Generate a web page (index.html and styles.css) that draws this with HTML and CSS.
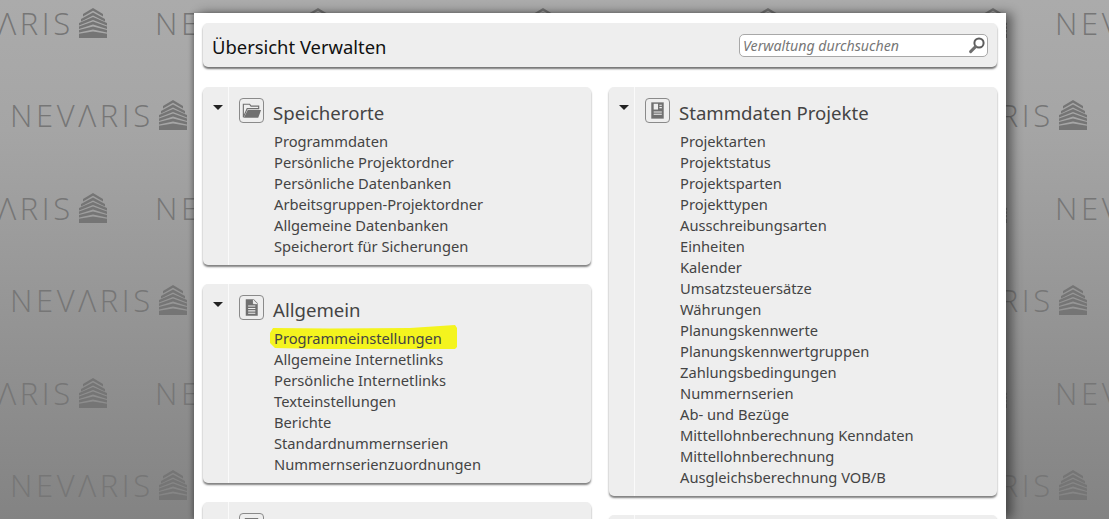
FILE: index.html
```html
<!DOCTYPE html>
<html lang="de">
<head>
<meta charset="utf-8">
<title>Übersicht Verwalten</title>
<link rel="stylesheet" href="styles.css">
</head>
<body>
<svg class="defs" width="0" height="0" aria-hidden="true">
  <symbol id="roof" viewBox="0 0 28 30">
    <path d="M14 0 L24 6 V8.5 L14 2.8 L4 8.5 V6 Z M14 4.5 L26 11 V13.5 L14 7.5 L2 13.5 V11 Z M14 9 L28 15 V17.5 L14 12 L0 17.5 V15 Z M14 13.5 L28 18.5 V21 L14 16.5 L0 21 V18.5 Z M0 22 L14 18.5 L28 22 V24.5 L14 21.5 L0 24.5 Z M0 25.8 L14 23.5 L28 25.8 V30 H0 Z" fill="#757575"/>
  </symbol>
</svg>

<div class="wall" aria-hidden="true">
  <div class="wall-row shifted"><span class="mark">NEVΛRIS<svg class="roof"><use href="#roof"/></svg></span><span class="mark">NEVΛRIS<svg class="roof"><use href="#roof"/></svg></span><span class="mark">NEVΛRIS<svg class="roof"><use href="#roof"/></svg></span><span class="mark">NEVΛRIS<svg class="roof"><use href="#roof"/></svg></span><span class="mark">NEVΛRIS<svg class="roof"><use href="#roof"/></svg></span><span class="mark">NEVΛRIS<svg class="roof"><use href="#roof"/></svg></span></div>
  <div class="wall-row"><span class="mark">NEVΛRIS<svg class="roof"><use href="#roof"/></svg></span><span class="mark">NEVΛRIS<svg class="roof"><use href="#roof"/></svg></span><span class="mark">NEVΛRIS<svg class="roof"><use href="#roof"/></svg></span><span class="mark">NEVΛRIS<svg class="roof"><use href="#roof"/></svg></span><span class="mark">NEVΛRIS<svg class="roof"><use href="#roof"/></svg></span></div>
  <div class="wall-row shifted"><span class="mark">NEVΛRIS<svg class="roof"><use href="#roof"/></svg></span><span class="mark">NEVΛRIS<svg class="roof"><use href="#roof"/></svg></span><span class="mark">NEVΛRIS<svg class="roof"><use href="#roof"/></svg></span><span class="mark">NEVΛRIS<svg class="roof"><use href="#roof"/></svg></span><span class="mark">NEVΛRIS<svg class="roof"><use href="#roof"/></svg></span><span class="mark">NEVΛRIS<svg class="roof"><use href="#roof"/></svg></span></div>
  <div class="wall-row"><span class="mark">NEVΛRIS<svg class="roof"><use href="#roof"/></svg></span><span class="mark">NEVΛRIS<svg class="roof"><use href="#roof"/></svg></span><span class="mark">NEVΛRIS<svg class="roof"><use href="#roof"/></svg></span><span class="mark">NEVΛRIS<svg class="roof"><use href="#roof"/></svg></span><span class="mark">NEVΛRIS<svg class="roof"><use href="#roof"/></svg></span></div>
  <div class="wall-row shifted"><span class="mark">NEVΛRIS<svg class="roof"><use href="#roof"/></svg></span><span class="mark">NEVΛRIS<svg class="roof"><use href="#roof"/></svg></span><span class="mark">NEVΛRIS<svg class="roof"><use href="#roof"/></svg></span><span class="mark">NEVΛRIS<svg class="roof"><use href="#roof"/></svg></span><span class="mark">NEVΛRIS<svg class="roof"><use href="#roof"/></svg></span><span class="mark">NEVΛRIS<svg class="roof"><use href="#roof"/></svg></span></div>
  <div class="wall-row"><span class="mark">NEVΛRIS<svg class="roof"><use href="#roof"/></svg></span><span class="mark">NEVΛRIS<svg class="roof"><use href="#roof"/></svg></span><span class="mark">NEVΛRIS<svg class="roof"><use href="#roof"/></svg></span><span class="mark">NEVΛRIS<svg class="roof"><use href="#roof"/></svg></span><span class="mark">NEVΛRIS<svg class="roof"><use href="#roof"/></svg></span></div>
</div>

<main class="panel">
  <header class="topbar">
    <h1 class="page-title">Übersicht Verwalten</h1>
    <div class="search">
      <span class="search-text">Verwaltung durchsuchen</span>
      <svg class="search-icon" viewBox="0 0 18 18"><circle cx="11" cy="7" r="4.6" fill="#fff" stroke="#5c5c5c" stroke-width="2"/><path d="M7.6 10.6 L2.6 15.6" stroke="#6e6e6e" stroke-width="3" stroke-linecap="round"/></svg>
    </div>
  </header>

  <div class="columns">
    <div class="column">
      <section class="card">
        <div class="gutter"><span class="caret"></span></div>
        <div class="card-body">
          <div class="card-head">
            <span class="icon-box">
              <svg viewBox="0 0 24 24"><path d="M3.5 19 V5.5 H10 L11.5 7.5 H19.5 V10 H7.5 L3.5 19 Z" fill="none" stroke="#707070" stroke-width="1.2"/><path d="M4 19.5 L8 11.5 H22 L19 19.5 Z" fill="#707070"/></svg>
            </span>
            <h2 class="card-title">Speicherorte</h2>
          </div>
          <ul class="links">
            <li>Programmdaten</li>
            <li>Persönliche Projektordner</li>
            <li>Persönliche Datenbanken</li>
            <li>Arbeitsgruppen-Projektordner</li>
            <li>Allgemeine Datenbanken</li>
            <li>Speicherort für Sicherungen</li>
          </ul>
        </div>
      </section>

      <section class="card">
        <div class="gutter"><span class="caret"></span></div>
        <div class="card-body">
          <div class="card-head">
            <span class="icon-box">
              <svg viewBox="0 0 24 24"><path d="M6 3.5 H14.5 L18.5 7.5 V20.5 H6 Z" fill="#707070"/><path d="M14 4 V8 H18" fill="#eee" stroke="#eee"/><path d="M8.5 10.5 H16 M8.5 13 H16 M8.5 15.5 H16 M8.5 18 H16" stroke="#eee" stroke-width="1.1"/></svg>
            </span>
            <h2 class="card-title">Allgemein</h2>
          </div>
          <ul class="links">
            <li><span class="marked"><svg class="marker" viewBox="0 0 187 25" preserveAspectRatio="none"><path d="M3 3 L60 3.5 L140 3 L185 0 L187 3 L187 22 L185 24 L120 24 L50 24 L5 23 L0 18 L0 8 Z" fill="#f4f41e"/></svg><span class="marked-text">Programmeinstellungen</span></span></li>
            <li>Allgemeine Internetlinks</li>
            <li>Persönliche Internetlinks</li>
            <li>Texteinstellungen</li>
            <li>Berichte</li>
            <li>Standardnummernserien</li>
            <li>Nummernserienzuordnungen</li>
          </ul>
        </div>
      </section>

      <section class="card">
        <div class="gutter"></div>
        <div class="card-body">
          <div class="card-head">
            <span class="icon-box">
              <svg viewBox="0 0 24 24"><path d="M5 5 H19" stroke="#707070" stroke-width="1.5"/></svg>
            </span>
          </div>
        </div>
      </section>
    </div>

    <div class="column">
      <section class="card">
        <div class="gutter"><span class="caret"></span></div>
        <div class="card-body">
          <div class="card-head">
            <span class="icon-box">
              <svg viewBox="0 0 24 24"><path d="M5.5 3.5 H18.5 V20.5 H5.5 Z" fill="#707070"/><path d="M8 5 H12.5 V11 H8 Z" fill="#eee"/><path d="M14 6.5 H16.5 M14 9 H16.5 M8 13.5 H16.5 M8 16 H16.5" stroke="#eee" stroke-width="1.1"/></svg>
            </span>
            <h2 class="card-title">Stammdaten Projekte</h2>
          </div>
          <ul class="links">
            <li>Projektarten</li>
            <li>Projektstatus</li>
            <li>Projektsparten</li>
            <li>Projekttypen</li>
            <li>Ausschreibungsarten</li>
            <li>Einheiten</li>
            <li>Kalender</li>
            <li>Umsatzsteuersätze</li>
            <li>Währungen</li>
            <li>Planungskennwerte</li>
            <li>Planungskennwertgruppen</li>
            <li>Zahlungsbedingungen</li>
            <li>Nummernserien</li>
            <li>Ab- und Bezüge</li>
            <li>Mittellohnberechnung Kenndaten</li>
            <li>Mittellohnberechnung</li>
            <li>Ausgleichsberechnung VOB/B</li>
          </ul>
        </div>
      </section>

      <section class="card">
        <div class="gutter"></div>
        <div class="card-body">
          <div class="card-head"></div>
        </div>
      </section>
    </div>
  </div>
</main>
</body>
</html>
```

FILE: styles.css
```css
* { box-sizing: border-box; }

html, body {
  margin: 0;
  height: 519px;
  overflow: hidden;
}

body {
  position: relative;
  background: linear-gradient(180deg, #ababab 0%, #a5a5a5 25%, #838383 100%);
  font-family: "Noto Sans", "Open Sans", sans-serif;
  color: #444;
}

.defs { position: absolute; }

/* Watermark wallpaper */
.wall {
  position: absolute;
  inset: 0;
  overflow: hidden;
  padding-top: 1px;
}

.wall-row {
  display: flex;
  gap: 48px;
  height: 92.4px;
  padding-left: 10px;
  white-space: nowrap;
}

.wall-row.shifted { margin-left: -80px; }

.mark {
  display: flex;
  flex: none;
  align-items: center;
  width: 177px;
  height: 44px;
  font-family: "Open Sans", sans-serif;
  font-weight: 300;
  font-size: 31px;
  letter-spacing: 3.6px;
  color: #767676;
  line-height: 44px;
  overflow: hidden;
}

.roof {
  flex: none;
  width: 28px;
  height: 30px;
  margin-left: auto;
}

/* White sheet */
.panel {
  position: relative;
  width: 812px;
  height: 506px;
  margin: 13px 0 0 194px;
  padding: 10px 9px 0;
  overflow: hidden;
  background: #fff;
  box-shadow: 6px 0 10px rgba(0, 0, 0, 0.45), -2px 0 4px rgba(0, 0, 0, 0.25);
}

.topbar {
  display: flex;
  align-items: center;
  justify-content: space-between;
  height: 44px;
  margin-bottom: 20px;
  padding: 0 9px;
  background: #eeeeee;
  border-radius: 5px;
  box-shadow: 0 2px 2px rgba(0, 0, 0, 0.55);
}

.page-title {
  margin: 2px 0 0;
  font-size: 18.4px;
  font-weight: 400;
  color: #111;
}

.search {
  display: flex;
  align-items: center;
  justify-content: space-between;
  width: 249px;
  height: 23px;
  padding: 0 1px 0 3px;
  background: #fff;
  border: 1px solid #a8a8a8;
  border-radius: 5px;
}

.search-text {
  font-size: 14.2px;
  font-style: italic;
  color: #777;
}

.search-icon { width: 18px; height: 18px; }

.columns {
  display: grid;
  grid-template-columns: 388px 388px;
  column-gap: 18px;
}

.column {
  display: flex;
  flex-direction: column;
  gap: 19px;
}

.card {
  display: flex;
  background: #eeeeee;
  border-radius: 5px;
  box-shadow: 0 2px 2px rgba(0, 0, 0, 0.5);
}

.gutter {
  flex: none;
  width: 26px;
  padding: 18px 0 0 10px;
  border-right: 1px solid #fafafa;
}

.caret {
  display: block;
  width: 0;
  height: 0;
  border-left: 5px solid transparent;
  border-right: 5px solid transparent;
  border-top: 5px solid #222;
}

.card-body {
  flex: 1;
  padding: 11px 0 8px 10px;
}

.card-head {
  display: flex;
  align-items: center;
  gap: 9px;
  height: 33px;
}

.icon-box {
  flex: none;
  width: 25px;
  height: 25px;
  margin-top: -8px;
  background: #eee;
  border: 1px solid #8a8a8a;
  border-radius: 4px;
}

.icon-box svg {
  display: block;
  width: 23px;
  height: 23px;
}

.card-title {
  margin: -4px 0 0;
  font-size: 18.6px;
  font-weight: 400;
  color: #444;
  line-height: 28px;
}

.links {
  margin: 0;
  padding: 0 0 0 35px;
  list-style: none;
  font-size: 14.7px;
  line-height: 21px;
  color: #444;
}

.marked {
  position: relative;
  display: inline-block;
}

.marker {
  position: absolute;
  left: -4px;
  top: -3px;
  width: 187px;
  height: 25px;
}

.marked-text { position: relative; }
```
